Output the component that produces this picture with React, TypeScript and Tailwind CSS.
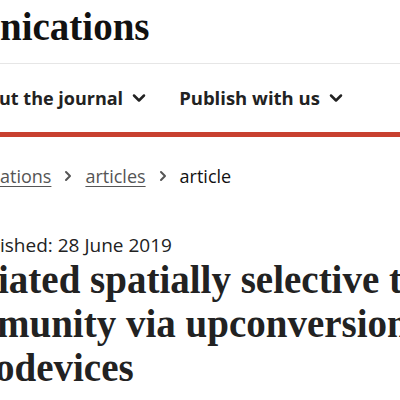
import { ChevronDown, ChevronRight } from "lucide-react";

const serif = "font-['Liberation_Serif','Times_New_Roman',serif]";
const sans = "font-['Open_Sans','Noto_Sans',sans-serif]";

export default function App() {
  return (
    <div className="w-[400px] h-[400px] overflow-hidden bg-white text-[#222]">
      {/* logo */}
      <div className="h-[64px] border-b border-[#e6e6e6] pt-[7px]">
        <div className={`${serif} font-bold text-[39px] leading-[39px] text-[#111] whitespace-nowrap`}>
          nications
        </div>
      </div>

      {/* nav */}
      <nav className={`${sans} h-[68px] pt-[21px] flex items-start whitespace-nowrap`}>
        <div className="flex items-center -ml-[1px]">
          <span className="text-[18px] leading-[26px] font-bold text-[#222]">ut the journal</span>
          <ChevronDown className="ml-[6px] w-[20px] h-[20px] text-[#222]" strokeWidth={3} />
        </div>
        <div className="flex items-center ml-[30px]">
          <span className="text-[18.5px] leading-[26px] font-bold text-[#222]">Publish with us</span>
          <ChevronDown className="ml-[6px] w-[20px] h-[20px] text-[#222]" strokeWidth={3} />
        </div>
      </nav>
      <div className="h-[5px] bg-[#c8402f]" />

      {/* breadcrumb */}
      <div className={`${sans} mt-[27px] flex items-center whitespace-nowrap text-[18px] leading-[24px]`}>
        <a className="text-[#555] underline underline-offset-[3px] decoration-1">ations</a>
        <ChevronRight className="mx-[9px] w-[16px] h-[16px] text-[#555]" strokeWidth={3} />
        <a className="text-[#555] underline underline-offset-[3px] decoration-1">articles</a>
        <ChevronRight className="mx-[9px] w-[16px] h-[16px] text-[#555]" strokeWidth={3} />
        <span className="text-[#111]">article</span>
      </div>

      {/* published */}
      <div className={`${sans} mt-[45px] text-[19px] leading-[24px] text-[#222] whitespace-nowrap`}>
        ished: 28 June 2019
      </div>

      {/* title */}
      <h1 className={`${serif} mt-[1px] font-bold text-[39px] leading-[44px] text-[#222] whitespace-nowrap`}>
        <span className="block -ml-[2px]">iated spatially selective triggering</span>
        <span className="block -ml-[3px]">munity via upconversion nanoparticle</span>
        <span className="block -ml-[5px]">odevices</span>
      </h1>
    </div>
  );
}
